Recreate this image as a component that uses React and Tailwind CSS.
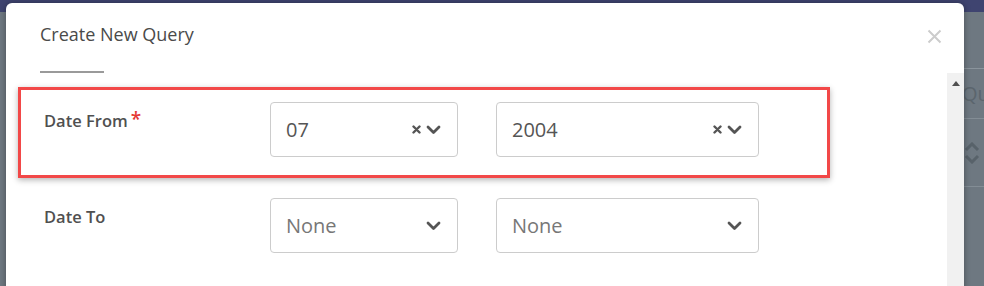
import { useState } from 'react';

const ClearIcon = () => (
  <svg width="9" height="9" viewBox="0 0 9 9" className="shrink-0">
    <path d="M1.5 1.5 L7.5 7.5 M7.5 1.5 L1.5 7.5" stroke="#555" strokeWidth="2.4" strokeLinecap="round" />
  </svg>
);

const Chevron = () => (
  <svg width="15" height="10" viewBox="0 0 15 10" className="shrink-0">
    <path d="M2 2 L7.5 7.5 L13 2" stroke="#555" strokeWidth="2.8" fill="none" strokeLinecap="round" strokeLinejoin="round" />
  </svg>
);

const Select = ({ value, placeholder, width }) => (
  <div
    className={`${width} h-[55px] border border-[#cccccc] rounded-[4px] bg-white flex items-center pl-[15px] pr-[16px]`}
  >
    <span className={`flex-1 text-[20px] ${value ? 'text-[#555555]' : 'text-[#777777]'}`}>
      {value || placeholder}
    </span>
    {value && (
      <span className="mr-[5px] flex items-center">
        <ClearIcon />
      </span>
    )}
    <Chevron />
  </div>
);

const DateRow = ({ label, required, month, year }) => (
  <div className="flex items-start">
    <div className="w-[226px] mt-[7px] text-[16.5px] font-semibold text-[#505050] leading-[24px] flex">
      {label}
      {required && <span className="text-[#e53935] ml-[3px] text-[19px] font-semibold leading-[20px]">*</span>}
    </div>
    <div className="flex gap-[38px]">
      <Select value={month} placeholder="None" width="w-[188px]" />
      <Select value={year} placeholder="None" width="w-[263px]" />
    </div>
  </div>
);

export default function App() {
  const [open] = useState(true);

  return (
    <div
      className="relative w-[984px] h-[286px] overflow-hidden bg-[#6e7881]"
      style={{ fontFamily: '"Open Sans", "Liberation Sans", sans-serif' }}
    >
      {/* Page behind the dialog */}
      <div className="h-[12px] bg-[#3f4470]" />
      <div className="flex flex-col items-end">
        <div className="w-[22px] mt-[56px] border-t border-[#8a949c]" />
        <div className="w-[22px] h-[49px] flex items-center text-[20px] text-[#5b656d] whitespace-nowrap overflow-hidden">Que</div>
        <div className="w-[22px] border-t border-[#838d95]" />
        <div className="w-[22px] h-[67px] flex items-center pl-[2px]">
          <svg width="16" height="22" viewBox="0 0 16 22">
            <path d="M2 8 L8 2 L14 8 M2 14 L8 20 L14 14" stroke="#58626a" strokeWidth="3" fill="none" />
          </svg>
        </div>
        <div className="w-[22px] border-t border-[#838d95]" />
      </div>

      {/* Dialog */}
      {open && (
        <div className="absolute left-[6px] top-[3px] w-[958px] h-[300px] bg-white rounded-t-[6px] shadow-[0_0_6px_rgba(0,0,0,0.35)]">
          <button className="absolute right-[22px] top-[26px]">
            <svg width="15" height="15" viewBox="0 0 15 15">
              <path d="M1.5 1.5 L13.5 13.5 M13.5 1.5 L1.5 13.5" stroke="#cccccc" strokeWidth="2" />
            </svg>
          </button>

          <div className="pl-[34px] pt-[19px]">
            <h2 className="text-[18px] leading-[25px] text-[#4a4a4a]">Create New Query</h2>
            <div className="mt-[24px] w-[64px] h-[2px] bg-[#9a9a9a]" />
          </div>

          {/* scrollbar */}
          <div className="absolute right-0 top-[70px] bottom-0 w-[17px] bg-[#f1f1f1] flex justify-center pt-[8px]">
            <svg width="8" height="5" viewBox="0 0 8 5">
              <path d="M0 5 L4 0 L8 5 Z" fill="#505050" />
            </svg>
          </div>

          <div className="ml-[12px] mt-[14px] w-[812px] h-[91px] border-[3px] border-[#f24848] shadow-[0_2px_6px_rgba(0,0,0,0.3)] pl-[23px] pt-[12px]">
            <DateRow label="Date From" required month="07" year="2004" />
          </div>

          <div className="pl-[38px] mt-[20px]">
            <DateRow label="Date To" />
          </div>
        </div>
      )}
    </div>
  );
}
